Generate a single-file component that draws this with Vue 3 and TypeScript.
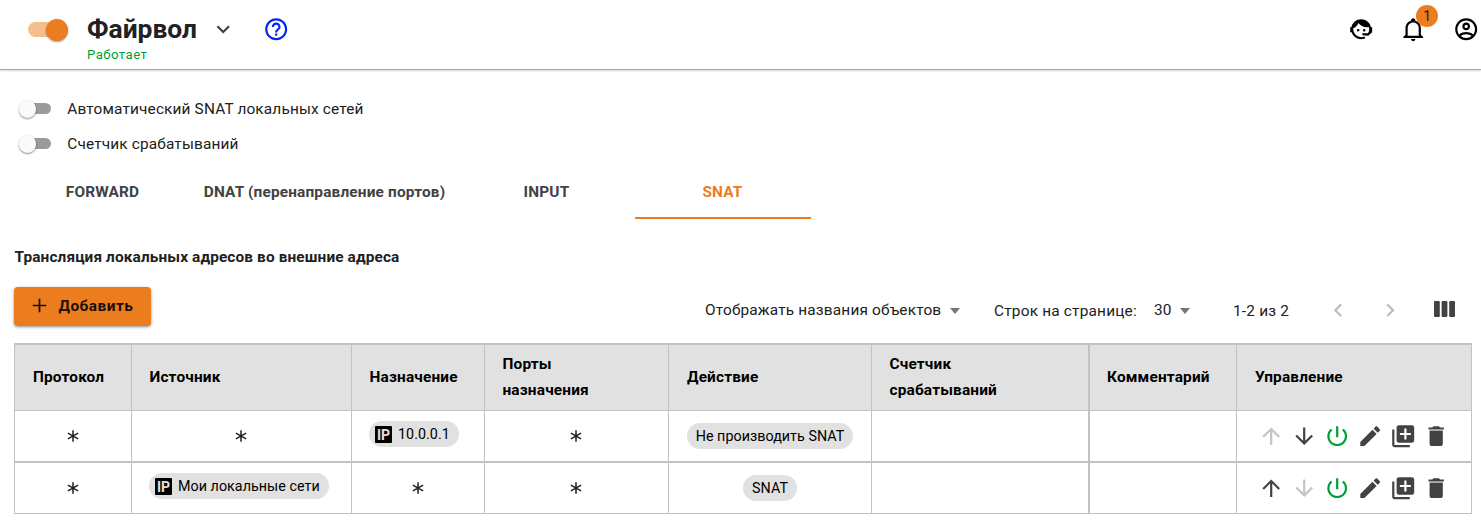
<script setup lang="ts">
interface Chip {
  text: string
  ip?: boolean
}
interface Rule {
  cells: (Chip | '*' | '')[]
  upDisabled: boolean
  downDisabled: boolean
}

const switches: string[] = ['Автоматический SNAT локальных сетей', 'Счетчик срабатываний']
const tabs = [
  { label: 'FORWARD', size: 'w-176' },
  { label: 'DNAT (перенаправление портов)', size: 'w-268' },
  { label: 'INPUT', size: 'w-177' },
  { label: 'SNAT', size: 'w-176', active: true },
]
const columns: string[] = [
  'Протокол', 'Источник', 'Назначение', 'Порты назначения',
  'Действие', 'Счетчик срабатываний', 'Комментарий', 'Управление',
]
const rules: Rule[] = [
  {
    cells: ['*', '*', { text: '10.0.0.1', ip: true }, '*', { text: 'Не производить SNAT' }, '', ''],
    upDisabled: true,
    downDisabled: false,
  },
  {
    cells: ['*', { text: 'Мои локальные сети', ip: true }, '*', '*', { text: 'SNAT' }, '', ''],
    upDisabled: false,
    downDisabled: true,
  },
]
const paths = {
  up: 'M4 12l1.41 1.41L11 7.83V20h2V7.83l5.58 5.59L20 12l-8-8-8 8z',
  down: 'M20 12l-1.41-1.41L13 16.17V4h-2v12.17l-5.58-5.59L4 12l8 8 8-8z',
  power: 'M13 3h-2v10h2V3zm4.83 2.17l-1.42 1.42C17.99 7.86 19 9.81 19 12c0 3.87-3.13 7-7 7s-7-3.13-7-7c0-2.19 1.01-4.14 2.58-5.42L6.17 5.17C4.23 6.82 3 9.26 3 12c0 4.97 4.03 9 9 9s9-4.03 9-9c0-2.74-1.23-5.18-3.17-6.83z',
  edit: 'M3 17.25V21h3.75L17.81 9.94l-3.75-3.75L3 17.25zM20.71 7.04c.39-.39.39-1.02 0-1.41l-2.34-2.34c-.39-.39-1.02-.39-1.41 0l-1.83 1.83 3.75 3.75 1.83-1.83z',
  copy: 'M4 6H2v14c0 1.1.9 2 2 2h14v-2H4V6zm16-4H8c-1.1 0-2 .9-2 2v12c0 1.1.9 2 2 2h12c1.1 0 2-.9 2-2V4c0-1.1-.9-2-2-2zm-1 9h-4v4h-2v-4H9V9h4V5h2v4h4v2z',
  trash: 'M6 19c0 1.1.9 2 2 2h8c1.1 0 2-.9 2-2V7H6v12zM19 4h-3.5l-1-1h-5l-1 1H5v2h14V4z',
}
function actionsOf(rule: Rule) {
  return [
    { name: 'up', d: paths.up, tone: rule.upDisabled ? 'muted' : '' },
    { name: 'down', d: paths.down, tone: rule.downDisabled ? 'muted' : '' },
    { name: 'power', d: paths.power, tone: 'green' },
    { name: 'edit', d: paths.edit, tone: '' },
    { name: 'copy', d: paths.copy, tone: '' },
    { name: 'trash', d: paths.trash, tone: '' },
  ]
}
</script>

<template>
  <div class="page">
    <header class="topbar">
      <span class="switch-on"><i /></span>
      <div class="title">
        <h1>Файрвол</h1>
        <small>Работает</small>
      </div>
      <svg class="icon chevron" viewBox="0 0 24 24"><path d="M7.41 8.59 12 13.17l4.59-4.58L18 10l-6 6-6-6z" /></svg>
      <svg class="icon help" viewBox="0 0 24 24"><path d="M11 18h2v-2h-2v2zm1-16C6.48 2 2 6.48 2 12s4.48 10 10 10 10-4.48 10-10S17.52 2 12 2zm0 18c-4.41 0-8-3.59-8-8s3.59-8 8-8 8 3.59 8 8-3.59 8-8 8zm0-14c-2.21 0-4 1.79-4 4h2c0-1.1.9-2 2-2s2 .9 2 2c0 2-3 1.75-3 5h2c0-2.25 3-2.5 3-5 0-2.21-1.79-4-4-4z" /></svg>
      <div class="account">
        <svg class="icon" viewBox="0 0 24 24"><path d="M18.72,14.76C19.07,13.91 19.26,13 19.26,12C19.26,11.28 19.15,10.59 18.96,9.95C18.31,10.1 17.63,10.18 16.92,10.18C13.86,10.18 11.15,8.67 9.5,6.34C8.61,8.5 6.91,10.26 4.77,11.22C4.73,11.47 4.73,11.74 4.73,12A7.27,7.27 0 0,0 12,19.27C13.05,19.27 14.06,19.04 14.97,18.63C15.54,19.72 15.8,20.26 15.78,20.26C14.14,20.81 12.87,21.08 12,21.08C9.58,21.08 7.27,20.13 5.57,18.42C4.53,17.38 3.76,16.11 3.33,14.73H2V10.18H3.09C3.93,6.04 7.6,2.92 12,2.92C14.4,2.92 16.71,3.87 18.42,5.58C19.69,6.84 20.54,8.45 20.89,10.18H22V14.67H22V14.69L22,14.73H21.94L18.38,18L13.08,17.4V15.73H17.91L18.72,14.76M9.27,11.77C9.57,11.77 9.86,11.89 10.07,12.11C10.28,12.32 10.4,12.61 10.4,12.91C10.4,13.21 10.28,13.5 10.07,13.71C9.86,13.92 9.57,14.04 9.27,14.04C8.64,14.04 8.13,13.54 8.13,12.91C8.13,12.28 8.64,11.77 9.27,11.77M14.72,11.77C15.35,11.77 15.85,12.28 15.85,12.91C15.85,13.54 15.35,14.04 14.72,14.04C14.09,14.04 13.58,13.54 13.58,12.91A1.14,1.14 0 0,1 14.72,11.77Z" /></svg>
        <span class="bell">
          <svg class="icon" viewBox="0 0 24 24"><path d="M10 21H14C14 22.1 13.1 23 12 23S10 22.1 10 21M21 19V20H3V19L5 17V11C5 7.9 7 5.2 10 4.3V4C10 2.9 10.9 2 12 2S14 2.9 14 4V4.3C17 5.2 19 7.9 19 11V17L21 19M17 11C17 8.2 14.8 6 12 6S7 8.2 7 11V18H17V11Z" /></svg>
          <b class="badge">1</b>
        </span>
        <svg class="icon" viewBox="0 0 24 24"><path d="M12,2A10,10 0 0,0 2,12A10,10 0 0,0 12,22A10,10 0 0,0 22,12A10,10 0 0,0 12,2M7.07,18.28C7.5,17.38 10.12,16.5 12,16.5C13.88,16.5 16.5,17.38 16.93,18.28C15.57,19.36 13.86,20 12,20C10.14,20 8.43,19.36 7.07,18.28M18.36,16.83C16.93,15.09 13.46,14.5 12,14.5C10.54,14.5 7.07,15.09 5.64,16.83C4.62,15.5 4,13.82 4,12C4,7.59 7.59,4 12,4C16.41,4 20,7.59 20,12C20,13.82 19.38,15.5 18.36,16.83M12,6C10.06,6 8.5,7.56 8.5,9.5C8.5,11.44 10.06,13 12,13C13.94,13 15.5,11.44 15.5,9.5C15.5,7.56 13.94,6 12,6M12,11A1.5,1.5 0 0,1 10.5,9.5A1.5,1.5 0 0,1 12,8A1.5,1.5 0 0,1 13.5,9.5A1.5,1.5 0 0,1 12,11Z" /></svg>
      </div>
    </header>

    <main>
      <div class="switches">
        <label v-for="s in switches" :key="s"><span class="switch-off"><i /></span>{{ s }}</label>
      </div>

      <nav class="tabs">
        <a v-for="t in tabs" :key="t.label" :class="[t.size, { active: t.active }]">{{ t.label }}</a>
      </nav>

      <h2>Трансляция локальных адресов во внешние адреса</h2>

      <div class="toolbar">
        <button class="add">
          <svg viewBox="0 0 24 24"><path d="M19 12.9h-6.100v6.100h-1.800v-6.100H5v-1.800h6.100V5h1.800v6.100H19z" /></svg><span>Добавить</span>
        </button>
        <span class="names">Отображать названия объектов</span>
        <i class="caret" />
        <span class="per-page">Строк на странице:</span>
        <span class="count">30</span>
        <i class="caret" />
        <span class="range">1-2 из 2</span>
        <svg class="icon prev" viewBox="0 0 24 24"><path d="M15.41 7.41 14 6l-6 6 6 6 1.41-1.41L10.83 12z" /></svg>
        <svg class="icon next" viewBox="0 0 24 24"><path d="M10 6 8.59 7.41 13.17 12l-4.58 4.59L10 18l6-6z" /></svg>
        <svg class="columns" viewBox="0 0 22 16"><rect width="5.8" height="16" rx="1" /><rect x="7.6" width="5.8" height="16" rx="1" /><rect x="15.2" width="5.8" height="16" rx="1" /></svg>
      </div>

      <section class="table">
        <div class="row head">
          <div v-for="c in columns" :key="c" class="cell"><span>{{ c }}</span></div>
        </div>
        <div v-for="(rule, r) in rules" :key="r" class="row body">
          <div v-for="(cell, i) in rule.cells" :key="i" class="cell">
            <svg v-if="cell === '*'" class="any" viewBox="0 0 12 12"><path d="M6 .3v11.4M.9 3.1l10.2 5.8M11.1 3.1.9 8.9" /></svg>
            <span v-else-if="cell" class="chip" :class="{ ip: cell.ip }"><b v-if="cell.ip">IP</b>{{ cell.text }}</span>
          </div>
          <div class="cell actions">
            <svg v-for="a in actionsOf(rule)" :key="a.name" class="icon" :class="a.tone" viewBox="0 0 24 24"><path :d="a.d" /><path v-if="a.name === 'trash'" class="lid" d="M6 6h12v1H6z" /></svg>
          </div>
        </div>
      </section>
    </main>
  </div>
</template>

<style>
body {
  margin: 0;
  background: #fff;
}
</style>

<style scoped>
.page {
  width: 1481px;
  height: 526px;
  overflow: hidden;
  font-family: Roboto, "Liberation Sans", sans-serif;
  font-size: 15.4px;
  letter-spacing: 0.15px;
  color: #212121;
}
.icon {
  display: block;
  flex: none;
  width: 26.4px;
  height: 26.4px;
  fill: currentColor;
}
.topbar {
  display: flex;
  box-sizing: border-box;
  height: 70px;
  border-bottom: 1px solid #a6a6a6;
  box-shadow: 0 1px 2px rgba(0, 0, 0, 0.15);
  padding-left: 28px;
}
.switch-on {
  display: flex;
  width: 40px;
  height: 15px;
  margin-top: 22px;
  border-radius: 8px;
  background: linear-gradient(to right, #f5bf8d 36px, transparent 36px);
  align-items: center;
  justify-content: flex-end;
}
.switch-on i {
  width: 22px;
  height: 22px;
  margin-top: 1px;
  border-radius: 50%;
  background: #eb7d1e;
  box-shadow: 0 1px 2px rgba(0, 0, 0, 0.4);
}
.title {
  width: 110px;
  margin-left: 19px;
  white-space: nowrap;
}
h1 {
  margin: 13px 0 0;
  font-size: 26.4px;
  line-height: 32px;
  font-weight: 700;
  letter-spacing: 0;
}
small {
  display: block;
  font-size: 13.2px;
  line-height: 16px;
  margin-top: 2px;
  letter-spacing: 0.44px;
  color: #009f35;
}
.chevron {
  margin: 16px 0 0 13px;
  color: #424242;
}
.help {
  margin: 16.3px 0 0 27px;
  color: #0026f5;
}
.account {
  display: flex;
  gap: 26px;
  margin: 16.3px 1.4px 0 auto;
  color: #000;
}
.bell {
  position: relative;
  margin: 0 0.8px 0 -0.8px;
}
.badge {
  position: absolute;
  left: 16px;
  top: -11px;
  width: 22px;
  height: 22px;
  border-radius: 50%;
  background: #eb7d1e;
  font-size: 13.8px;
  line-height: 23px;
  font-weight: 400;
  letter-spacing: 0;
  text-align: center;
  color: #1c1c1c;
}
main {
  padding: 21px 9px 0 14px;
}
.switches label {
  display: flex;
  align-items: center;
  height: 35px;
}
.switch-off {
  display: flex;
  align-items: center;
  width: 32px;
  height: 11px;
  margin: 0 16.3px 0 5px;
  border-radius: 6px;
  background: linear-gradient(to right, transparent 8px, #9b9b9b 8px);
}
.switch-off i {
  width: 17.6px;
  height: 17.6px;
  margin: 1px 0 0 -0.5px;
  flex: none;
  border-radius: 50%;
  background: #fafafa;
  box-shadow: 0 1px 2px rgba(0, 0, 0, 0.45);
}
.tabs {
  display: flex;
  height: 54px;
  margin-top: 4px;
  font-weight: 700;
  color: #424242;
}
.tabs a {
  box-sizing: border-box;
  height: 54px;
  line-height: 54px;
  text-align: center;
  white-space: nowrap;
  letter-spacing: 0.165px;
}
.tabs .w-268 {
  padding-left: 1px;
}
.tabs .w-176:first-child {
  padding-left: 1px;
}
.tabs .active {
  padding-right: 1px;
  color: #eb7d1e;
  border-bottom: 2px solid #eb7d1e;
}
.w-176 { width: 176px; }
.w-177 { width: 177px; }
.w-268 { width: 268px; }
h2 {
  margin: 28px 0 0 0.5px;
  font-size: 15.4px;
  line-height: 20px;
  font-weight: 700;
  letter-spacing: 0.12px;
}
.toolbar {
  display: flex;
  align-items: center;
  height: 46px;
  margin-top: 20px;
  white-space: nowrap;
}
.add {
  display: flex;
  align-items: center;
  align-self: flex-start;
  width: 137px;
  height: 39px;
  padding: 0 0 0 13.5px;
  border: 0;
  border-radius: 4px;
  background: #eb7d1e;
  box-shadow: 0 1px 3px rgba(0, 0, 0, 0.45);
  font: inherit;
  font-weight: 700;
  letter-spacing: 0.48px;
  color: #1c1009;
}
.add svg {
  width: 23px;
  height: 23px;
  margin: 0 8px 1.5px 0;
  fill: currentColor;
}
.add span {
  margin-bottom: 2px;
}
.names {
  width: 237px;
  margin-left: 554px;
  letter-spacing: 0.165px;
}
.caret {
  margin: 2px 0 0 8px;
  border: 5px solid transparent;
  border-top: 6px solid #757575;
  border-bottom: 0;
}
.per-page {
  width: 144px;
  margin: 2px 0 0 34px;
  letter-spacing: 0.2px;
}
.count {
  width: 18px;
  margin-left: 16px;
}
.range {
  width: 57px;
  margin: 2px 0 0 43px;
  letter-spacing: 0.2px;
}
.prev,
.next {
  color: #bdbdbd;
  margin-left: 34.5px;
}
.next {
  margin-left: 26px;
}
.columns {
  width: 22px;
  height: 16px;
  margin: 0 0 3px 31px;
  fill: #424242;
}
.table {
  margin-top: 10px;
  border-right: 1px solid #c2c2c2;
  border-bottom: 1px solid #c2c2c2;
  width: 1457px;
}
.row {
  display: grid;
  grid-template-columns: 117px 220px 133px 184px 203px 217px 148px 235px;
  height: 51px;
  box-sizing: border-box;
  border-top: 1px solid #c2c2c2;
}
.row.head {
  height: 67px;
  border-top-width: 2px;
  background: #e1e1e1;
  font-weight: 700;
  line-height: 26px;
  letter-spacing: 0.165px;
  color: #000;
}
.row:last-child {
  height: 52px;
  border-top-width: 2px;
}
.cell {
  display: flex;
  align-items: center;
  justify-content: center;
  box-sizing: border-box;
  min-width: 0;
  padding-right: 1px;
  border-left: 1px solid #c2c2c2;
}
.cell:first-child,
.cell:nth-child(5) {
  padding-right: 0;
}
.cell:nth-child(7) {
  border-left-width: 2px;
}
.head .cell {
  justify-content: flex-start;
  padding: 0 60px 2px 17.5px;
}
.head .cell:not(:nth-child(4)):not(:nth-child(6)) {
  padding-right: 0;
}
.head .cell:first-child,
.head .cell:nth-child(5),
.head .cell:nth-child(8) {
  padding-left: 18px;
}
.head .cell:nth-child(7) {
  padding-left: 17px;
}
.any {
  width: 12px;
  height: 12px;
  fill: none;
  stroke: #212121;
  stroke-width: 1.5;
}
.chip {
  display: flex;
  align-items: center;
  box-sizing: border-box;
  height: 26px;
  padding: 0 9px;
  border-radius: 13px;
  background: #e1e1e1;
  font-size: 14.3px;
  letter-spacing: 0.04px;
  white-space: nowrap;
  color: #000;
}
.chip.ip {
  margin: 0 auto 4px 17px;
  padding-left: 6px;
}
.chip b {
  width: 17px;
  height: 17px;
  margin-right: 6px;
  border-radius: 1px;
  background: #000;
  color: #e1e1e1;
  font-size: 14px;
  line-height: 18px;
  letter-spacing: 0;
  text-align: center;
}
.actions {
  justify-content: flex-start;
  gap: 6.6px;
  padding-left: 21.4px;
  color: #424242;
}
.muted {
  color: #c4c4c4;
}
.green {
  color: #009f35;
}
.lid {
  fill: #9b9b9b;
}
</style>
